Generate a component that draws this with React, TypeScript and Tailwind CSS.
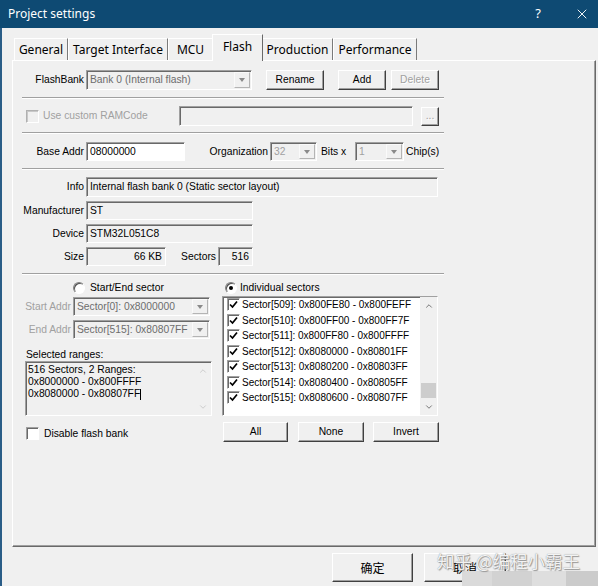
import { X, ChevronUp, ChevronDown } from "lucide-react";

const sunken =
  "border border-t-[#a0a0a0] border-l-[#a0a0a0] border-r-white border-b-white shadow-[inset_1px_1px_0_#696969]";
const raised =
  "border border-t-white border-l-white border-r-[#404040] border-b-[#404040] shadow-[inset_-1px_-1px_0_#a0a0a0]";

const sectors = [
  ["509", "0x800FE80 - 0x800FEFF"],
  ["510", "0x800FF00 - 0x800FF7F"],
  ["511", "0x800FF80 - 0x800FFFF"],
  ["512", "0x8080000 - 0x80801FF"],
  ["513", "0x8080200 - 0x80803FF"],
  ["514", "0x8080400 - 0x80805FF"],
  ["515", "0x8080600 - 0x80807FF"],
];

function Button({
  label,
  className,
  disabled,
}: {
  label: string;
  className: string;
  disabled?: boolean;
}) {
  return (
    <div
      className={`${raised} flex items-center justify-center bg-[#f0f0f0] ${
        disabled ? "text-[#a0a0a0] [text-shadow:1px_1px_0_#fff]" : "text-black"
      } ${className}`}
    >
      {label}
    </div>
  );
}

function Field({
  text,
  className,
  right,
}: {
  text?: string;
  className: string;
  right?: boolean;
}) {
  return (
    <div
      className={`${sunken} flex items-center px-[3px] whitespace-nowrap ${
        right ? "justify-end" : ""
      } ${className}`}
    >
      {text}
    </div>
  );
}

function Combo({ text, className }: { text: string; className: string }) {
  return (
    <div className={`${sunken} flex items-stretch bg-[#f0f0f0] ${className}`}>
      <div className="flex-1 flex items-center pl-[3px] whitespace-nowrap overflow-hidden">
        {text}
      </div>
      <div className="w-[16px] m-[1px] flex items-center justify-center border border-t-[#fafafa] border-l-[#fafafa] border-r-[#b4b4b4] border-b-[#b4b4b4]">
        <div className="w-0 h-0 border-x-[3.5px] border-x-transparent border-t-[4px] border-t-[#8a8a8a]" />
      </div>
    </div>
  );
}

function Check({ checked, disabled }: { checked?: boolean; disabled?: boolean }) {
  if (disabled) {
    return (
      <div className="w-[13px] h-[13px] border border-t-[#b0b0b0] border-l-[#b0b0b0] border-r-white border-b-white shadow-[inset_1px_1px_0_#c8c8c8] bg-[#f0f0f0]" />
    );
  }
  return (
    <div className={`w-[13px] h-[13px] ${sunken} bg-white flex items-center justify-center`}>
      {checked && (
        <svg width="9" height="9" viewBox="0 0 9 9">
          <path d="M1 4.5 L3.5 7 L8 1.5" stroke="#000" strokeWidth="1.7" fill="none" />
        </svg>
      )}
    </div>
  );
}

function Radio({ checked }: { checked?: boolean }) {
  return (
    <div className="w-[12px] h-[12px] rounded-full border border-t-[#808080] border-l-[#808080] border-r-white border-b-white shadow-[inset_1px_1px_0_#505050] bg-white flex items-center justify-center">
      {checked && <div className="w-[4px] h-[4px] rounded-full bg-black" />}
    </div>
  );
}

function Sep() {
  return <div className="w-[422px] h-[2px] border-t border-t-[#a0a0a0] border-b border-b-white" />;
}

function Label({ text, className }: { text: string; className: string }) {
  return (
    <div className={`flex items-center justify-end pr-[2px] whitespace-nowrap ${className}`}>
      {text}
    </div>
  );
}

export default function App() {
  return (
    <div className="w-[598px] h-[586px] bg-[#f0f0f0] relative overflow-hidden font-['Liberation_Sans',Arial,sans-serif] text-[10.3px] text-black">
      {/* title bar */}
      <div className="h-[28px] bg-[#0e4a73] flex items-center text-white font-['Noto_Sans',sans-serif] text-[12px]">
        <div className="pl-[8px]">Project settings</div>
        <div className="ml-auto w-[36px] text-center text-[13px]">?</div>
        <div className="ml-[10px] w-[32px] flex justify-center">
          <X size={16} strokeWidth={1.4} />
        </div>
      </div>

      <div className="flex h-[558px]">
        <div className="w-[2px] bg-[#2a5d87]" />
        <div className="flex-1 flex flex-col">
          {/* tabs */}
          <div className="h-[32px] flex items-end pl-[12px] font-['Noto_Sans',sans-serif] text-[12px]">
            <div className="w-[54px] h-[22px] flex items-center justify-center border-t border-l border-white border-r border-r-[#7a7a7a]">
              General
            </div>
            <div className="w-[100px] h-[22px] flex items-center justify-center border-t border-l border-white border-r border-r-[#7a7a7a]">
              Target Interface
            </div>
            <div className="w-[44px] h-[22px] flex items-center justify-center border-t border-l border-white">
              MCU
            </div>
            <div className="relative z-10 w-[51px] h-[27px] mb-[-1px] pb-[2px] bg-[#f0f0f0] flex items-center justify-center border-t border-l border-white border-r border-r-[#696969]">
              Flash
            </div>
            <div className="w-[70px] h-[22px] flex items-center justify-center border-t border-white border-r border-r-[#7a7a7a]">
              Production
            </div>
            <div className="w-[84px] h-[22px] flex items-center justify-center border-t border-l border-white border-r border-r-[#7a7a7a]">
              Performance
            </div>
          </div>

          {/* panel */}
          <div className="ml-[10px] w-[584px] h-[487px] border-t border-l border-white border-r border-b border-r-[#696969] border-b-[#696969] shadow-[inset_-1px_-1px_0_#a0a0a0] pl-[9px] pt-[9px]">
            <div className="flex h-[20px]">
              <Label text="FlashBank" className="w-[64px]" />
              <Combo text="Bank 0 (Internal flash)" className="w-[166px] text-[#6d6d6d]" />
              <Button label="Rename" className="ml-[14px] w-[58px]" />
              <Button label="Add" className="ml-[14px] w-[48px]" />
              <Button label="Delete" className="ml-[5px] w-[48px]" disabled />
            </div>
            <div className="mt-[7px]">
              <Sep />
            </div>
            <div className="mt-[7px] flex h-[20px] items-center">
              <div className="w-[157px] flex items-center">
                <div className="ml-[4px]">
                  <Check disabled />
                </div>
                <div className="ml-[4px] text-[#a0a0a0]">Use custom RAMCode</div>
              </div>
              <Field className="w-[234px] h-[20px] bg-[#f0f0f0]" />
              <Button label="..." className="ml-[8px] w-[18px] h-[19px]" disabled />
            </div>
            <div className="mt-[6px]">
              <Sep />
            </div>
            <div className="mt-[8px] flex h-[19px]">
              <Label text="Base Addr" className="w-[64px]" />
              <Field text="08000000" className="w-[99px] bg-white" />
              <Label text="Organization" className="w-[85px] pr-[1px]" />
              <Combo text="32" className="w-[47px] text-[#a0a0a0]" />
              <div className="w-[38px] pl-[4px] flex items-center">Bits x</div>
              <Combo text="1" className="w-[49px] text-[#a0a0a0]" />
              <div className="pl-[2px] flex items-center">Chip(s)</div>
            </div>
            <div className="mt-[7px]">
              <Sep />
            </div>
            <div className="mt-[7px] flex h-[20px]">
              <Label text="Info" className="w-[64px]" />
              <Field text="Internal flash bank 0 (Static sector layout)" className="w-[352px] bg-[#f0f0f0]" />
            </div>
            <div className="mt-[4px] flex h-[19px]">
              <Label text="Manufacturer" className="w-[64px]" />
              <Field text="ST" className="w-[167px] bg-[#f0f0f0]" />
            </div>
            <div className="mt-[4px] flex h-[19px]">
              <Label text="Device" className="w-[64px]" />
              <Field text="STM32L051C8" className="w-[167px] bg-[#f0f0f0]" />
            </div>
            <div className="mt-[4px] flex h-[19px]">
              <Label text="Size" className="w-[64px]" />
              <Field text="66 KB" right className="w-[80px] bg-[#f0f0f0]" />
              <Label text="Sectors" className="w-[52px]" />
              <Field text="516" right className="w-[35px] bg-[#f0f0f0]" />
            </div>
            <div className="mt-[7px]">
              <Sep />
            </div>

            <div className="mt-[6px] flex">
              {/* left column */}
              <div className="w-[190px] flex flex-col">
                <div className="h-[13px] flex items-center">
                  <div className="ml-[51px]">
                    <Radio />
                  </div>
                  <div className="ml-[5px]">Start/End sector</div>
                </div>
                <div className="mt-[3px] flex h-[19px]">
                  <Label text="Start Addr" className="w-[51px] pr-[1px] text-[#a0a0a0]" />
                  <Combo text="Sector[0]: 0x8000000" className="w-[137px] text-[#6d6d6d]" />
                </div>
                <div className="mt-[4px] flex h-[19px]">
                  <Label text="End Addr" className="w-[51px] pr-[1px] text-[#a0a0a0]" />
                  <Combo text="Sector[515]: 0x80807FF" className="w-[137px] text-[#6d6d6d]" />
                </div>
                <div className="mt-[9px] h-[13px] pl-[4px] flex items-center">Selected ranges:</div>
                <div className={`ml-[3px] w-[187px] h-[55px] ${sunken} bg-[#f0f0f0] flex`}>
                  <div className="flex-1 pl-[2px] pt-[2px] leading-[12px]">
                    <div>516 Sectors, 2 Ranges:</div>
                    <div>0x8000000 - 0x800FFFF</div>
                    <div className="flex items-center">
                      0x8080000 - 0x80807FF
                      <span className="inline-block w-[1px] h-[11px] bg-black" />
                    </div>
                  </div>
                  <div className="w-[17px] flex flex-col justify-between text-[#c4c4c4]">
                    <div className="h-[17px] flex items-center justify-center">
                      <ChevronUp size={10} strokeWidth={2} />
                    </div>
                    <div className="h-[17px] flex items-center justify-center">
                      <ChevronDown size={10} strokeWidth={2} />
                    </div>
                  </div>
                </div>
                <div className="mt-[11px] h-[13px] flex items-center">
                  <div className="ml-[4px]">
                    <Check />
                  </div>
                  <div className="ml-[5px]">Disable flash bank</div>
                </div>
              </div>

              {/* right column */}
              <div className="ml-[10px] flex flex-col">
                <div className="h-[13px] flex items-center">
                  <div className="ml-[3px]">
                    <Radio checked />
                  </div>
                  <div className="ml-[3px]">Individual sectors</div>
                </div>
                <div className={`mt-[2px] w-[216px] h-[120px] ${sunken} bg-white flex`}>
                  <div className="flex-1 flex flex-col text-[10px]">
                    {sectors.map(([n, range]) => (
                      <div key={n} className="h-[15.5px] flex items-center pl-[4px] whitespace-nowrap">
                        <Check checked />
                        <span className="ml-[2px]">
                          Sector[{n}]: {range}
                        </span>
                      </div>
                    ))}
                  </div>
                  <div className="w-[17px] flex flex-col bg-[#f0f0f0] text-[#606060]">
                    <div className="h-[17px] flex items-center justify-center">
                      <ChevronUp size={10} strokeWidth={2} />
                    </div>
                    <div className="h-[69px]" />
                    <div className="h-[15px] mx-[1px] bg-[#cdcdcd]" />
                    <div className="h-[17px] flex items-center justify-center">
                      <ChevronDown size={10} strokeWidth={2} />
                    </div>
                  </div>
                </div>
                <div className="mt-[6px] flex h-[20px]">
                  <Button label="All" className="ml-[1px] w-[65px]" />
                  <Button label="None" className="ml-[10px] w-[66px]" />
                  <Button label="Invert" className="ml-[9px] w-[66px]" />
                </div>
              </div>
            </div>
          </div>

          {/* dialog buttons */}
          <div className="mt-[6px] pl-[330px] flex font-['Noto_Sans_CJK_SC',sans-serif] text-[12px]">
            <Button label="确定" className="w-[81px] h-[29px]" />
            <Button label="取消" className="ml-[11px] w-[82px] h-[29px]" />
          </div>
        </div>
      </div>

      {/* watermark overlay */}
      <div className="absolute left-[462px] top-[571px] w-[136px] h-[15px] flex">
        <div className="w-[30px] bg-[#dadada]" />
        <div className="w-[40px] bg-[#d2d2d2]" />
        <div className="w-[34px] bg-[#dedede]" />
        <div className="w-[32px] bg-[#cbcbcb]" />
      </div>
      <div className="absolute left-[437px] top-[548px] whitespace-nowrap font-['Noto_Sans_CJK_SC',sans-serif] text-[17.5px] text-white/90 [text-shadow:0_0_1px_#777,1px_1px_1px_#999]">
        知乎 @编程小霸王
      </div>
    </div>
  );
}
